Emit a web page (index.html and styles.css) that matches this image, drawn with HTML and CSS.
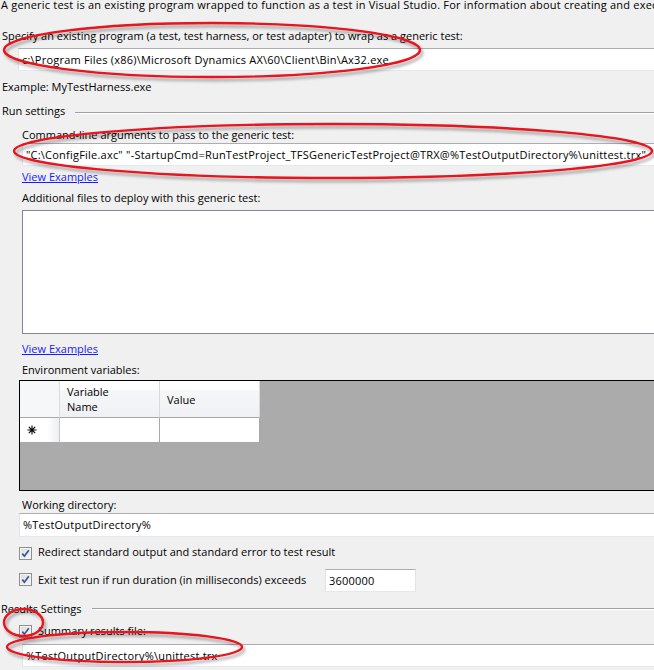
FILE: index.html
```html
<!DOCTYPE html>
<html>
<head>
<meta charset="utf-8">
<link rel="stylesheet" href="styles.css">
</head>
<body>
<div class="page">
  <p class="intro">A generic test is an existing program wrapped to function as a test in Visual Studio. For information about creating and executing generic tests, see the documentation.</p>
  <div class="label prog-label">Specify an existing program (a test, test harness, or test adapter) to wrap as a generic test:</div>
  <div class="field prog-field">c:\Program Files (x86)\Microsoft Dynamics AX\60\Client\Bin\Ax32.exe</div>
  <div class="label example">Example: MyTestHarness.exe</div>

  <div class="section-head run-head"><span>Run settings</span><span class="rule"></span></div>
  <div class="group">
    <div class="label cmd-label">Command-line arguments to pass to the generic test:</div>
    <div class="field cmd-field">"C:\ConfigFile.axc" "-StartupCmd=RunTestProject_TFSGenericTestProject@TRX@%TestOutputDirectory%\unittest.trx"</div>
    <a class="link link1" href="#">View Examples</a>
    <div class="label add-label">Additional files to deploy with this generic test:</div>
    <div class="listbox"></div>
    <a class="link link2" href="#">View Examples</a>
    <div class="label env-label">Environment variables:</div>
    <div class="grid">
      <div class="grow ghead">
        <div class="corner"></div>
        <div class="col col-name">Variable<br>Name</div>
        <div class="col col-value">Value</div>
      </div>
      <div class="grow gdata">
        <div class="rowhdr">
          <svg class="star" width="10" height="10" viewBox="0 0 10 10"><path d="M5 0.5V9.5M0.5 5H9.5M1.8 1.8L8.2 8.2M8.2 1.8L1.8 8.2" stroke="#000" stroke-width="1.1" fill="none"/></svg>
        </div>
        <div class="cell"></div>
        <div class="cell"></div>
      </div>
    </div>
    <div class="label wd-label">Working directory:</div>
    <div class="field wd-field">%TestOutputDirectory%</div>
    <div class="check-row row-redirect">
      <span class="check"><svg width="9" height="9" viewBox="0 0 9 9"><path d="M1.3 4.6L3.4 7.2L7.8 1.3" stroke="#3c5490" stroke-width="1.7" fill="none"/></svg></span>
      <span class="check-text">Redirect standard output and standard error to test result</span>
    </div>
    <div class="check-row row-exit">
      <span class="check"><svg width="9" height="9" viewBox="0 0 9 9"><path d="M1.3 4.6L3.4 7.2L7.8 1.3" stroke="#3c5490" stroke-width="1.7" fill="none"/></svg></span>
      <span class="check-text exit-text">Exit test run if run duration (in milliseconds) exceeds</span>
      <span class="field timeout-field">3600000</span>
    </div>
  </div>

  <div class="section-head results-head"><span>Results Settings</span><span class="rule"></span></div>
  <div class="group">
    <div class="check-row row-summary">
      <span class="check"><svg width="9" height="9" viewBox="0 0 9 9"><path d="M1.3 4.6L3.4 7.2L7.8 1.3" stroke="#3c5490" stroke-width="1.7" fill="none"/></svg></span>
      <span class="check-text">Summary results file:</span>
    </div>
    <div class="field summary-field">%TestOutputDirectory%\unittest.trx</div>
  </div>

  <svg class="marks" width="654" height="670" viewBox="0 0 654 670">
    <defs>
      <filter id="shadow" x="-10%" y="-30%" width="120%" height="160%">
        <feDropShadow dx="2" dy="3" stdDeviation="1.4" flood-color="#000" flood-opacity="0.35"/>
      </filter>
    </defs>
    <g fill="none" stroke="#e8121c" stroke-width="2.4" filter="url(#shadow)">
      <ellipse cx="212" cy="53" rx="208" ry="27"/>
      <ellipse cx="333" cy="154" rx="319" ry="27"/>
      <ellipse cx="23.5" cy="625.5" rx="19.5" ry="13.5"/>
      <ellipse cx="124.5" cy="650" rx="117.5" ry="15"/>
    </g>
  </svg>
</div>
</body>
</html>
```
FILE: styles.css
```css
html, body {
  margin: 0;
  padding: 0;
  background: #f0f0f0;
  overflow: hidden;
}
body {
  width: 654px;
  height: 670px;
  font-family: "Open Sans", "Noto Sans", sans-serif;
  font-size: 11px;
  color: #000;
}
.page {
  position: relative;
  width: 690px;
  height: 670px;
}
.intro {
  margin: -3px 0 0 1px;
  line-height: 16px;
  white-space: nowrap;
  letter-spacing: 0.2px;
}
.label {
  line-height: 16px;
  white-space: nowrap;
}
.prog-label { margin: 15px 0 0 2px; }
.example { margin: 8px 0 0 2px; }

.field {
  display: block;
  box-sizing: border-box;
  height: 23px;
  line-height: 21px;
  padding: 0 3px;
  background: #fff;
  border: 1px solid;
  border-color: #abadb3 #e2e3ea #e3e9ef #e2e3ea;
  white-space: nowrap;
  overflow: hidden;
  letter-spacing: 0.22px;
}
.prog-field { margin: 4px 0 0 18px; }

.section-head {
  display: flex;
  line-height: 16px;
  padding-left: 2px;
}
.section-head .rule {
  flex: 1;
  height: 0;
  margin-left: 10px;
  border-top: 1px solid #a0a0a0;
  border-bottom: 1px solid #fff;
}
.run-head { margin-top: 8px; }
.run-head .rule { margin-top: 9px; }
.results-head { margin-top: 9px; padding-left: 1px; }
.results-head .rule { margin-top: 7px; }

.group { padding-left: 22px; }

.cmd-label { margin-top: 8px; }
.cmd-field { margin-top: 0; }

.link {
  display: block;
  width: max-content;
  line-height: 16px;
  color: #1a1aff;
  text-decoration: underline;
}
.link1 { margin-top: 3px; }
.link2 { margin-top: 7px; }
.add-label { margin-top: 5px; }
.listbox {
  margin-top: 4px;
  height: 124px;
  box-sizing: border-box;
  background: #fff;
  border: 1px solid #828790;
}
.env-label { margin-top: 5px; }

.grid {
  margin: 2px 0 0 -3px;
  height: 111px;
  box-sizing: border-box;
  border: 1px solid #000;
  background: #ababab;
}
.grow { display: flex; width: 240px; }
.ghead { height: 37px; }
.corner {
  width: 40px;
  box-sizing: border-box;
  background: #f6f7f9;
  border-right: 1px solid #dcdcdc;
  border-bottom: 1px solid #a8a8a8;
}
.col {
  width: 100px;
  box-sizing: border-box;
  padding: 3px 0 0 7px;
  line-height: 15px;
  background: linear-gradient(#ffffff 0, #ffffff 9px, #f6f7f9 9px, #f0f1f4 100%);
  border-right: 1px solid #dadada;
  border-bottom: 1px solid #a8a8a8;
}
.col-value { padding-top: 11px; }
.gdata { height: 25px; }
.rowhdr {
  width: 40px;
  box-sizing: border-box;
  padding: 7px 0 0 7px;
  background: linear-gradient(90deg, #ffffff 0, #ffffff 70%, #eceef1 100%);
  border-right: 1px solid #c8c8c8;
  border-bottom: 1px solid #a8a8a8;
}
.star { display: block; }
.cell {
  width: 100px;
  box-sizing: border-box;
  background: #fff;
  border-right: 1px solid #a8a8a8;
  border-bottom: 1px solid #a8a8a8;
}

.wd-label { margin-top: 6px; }
.wd-field { margin-left: -3px; height: 24px; line-height: 22px; }

.check-row {
  display: flex;
  align-items: flex-start;
  margin-left: -3px;
  line-height: 16px;
  white-space: nowrap;
}
.check {
  display: flex;
  align-items: center;
  justify-content: center;
  width: 13px;
  height: 13px;
  box-sizing: border-box;
  margin-right: 6px;
  border: 1px solid #8e8f8f;
  background: linear-gradient(135deg, #d8dbe0 0, #f7f8f9 100%);
  box-shadow: inset 0 0 0 1px #f4f4f4;
}
.row-redirect { margin-top: 7px; }
.row-redirect .check { margin-top: 3px; }
.row-exit { margin-top: 9px; }
.row-exit .check { margin-top: 4px; }
.exit-text { margin-top: 3px; width: 287px; }
.timeout-field { width: 91px; }
.row-summary { margin-top: 6px; }
.row-summary .check { margin-top: 2px; }
.summary-field { margin-top: 5px; }

.marks {
  position: absolute;
  left: 0;
  top: 0;
  pointer-events: none;
}
```
